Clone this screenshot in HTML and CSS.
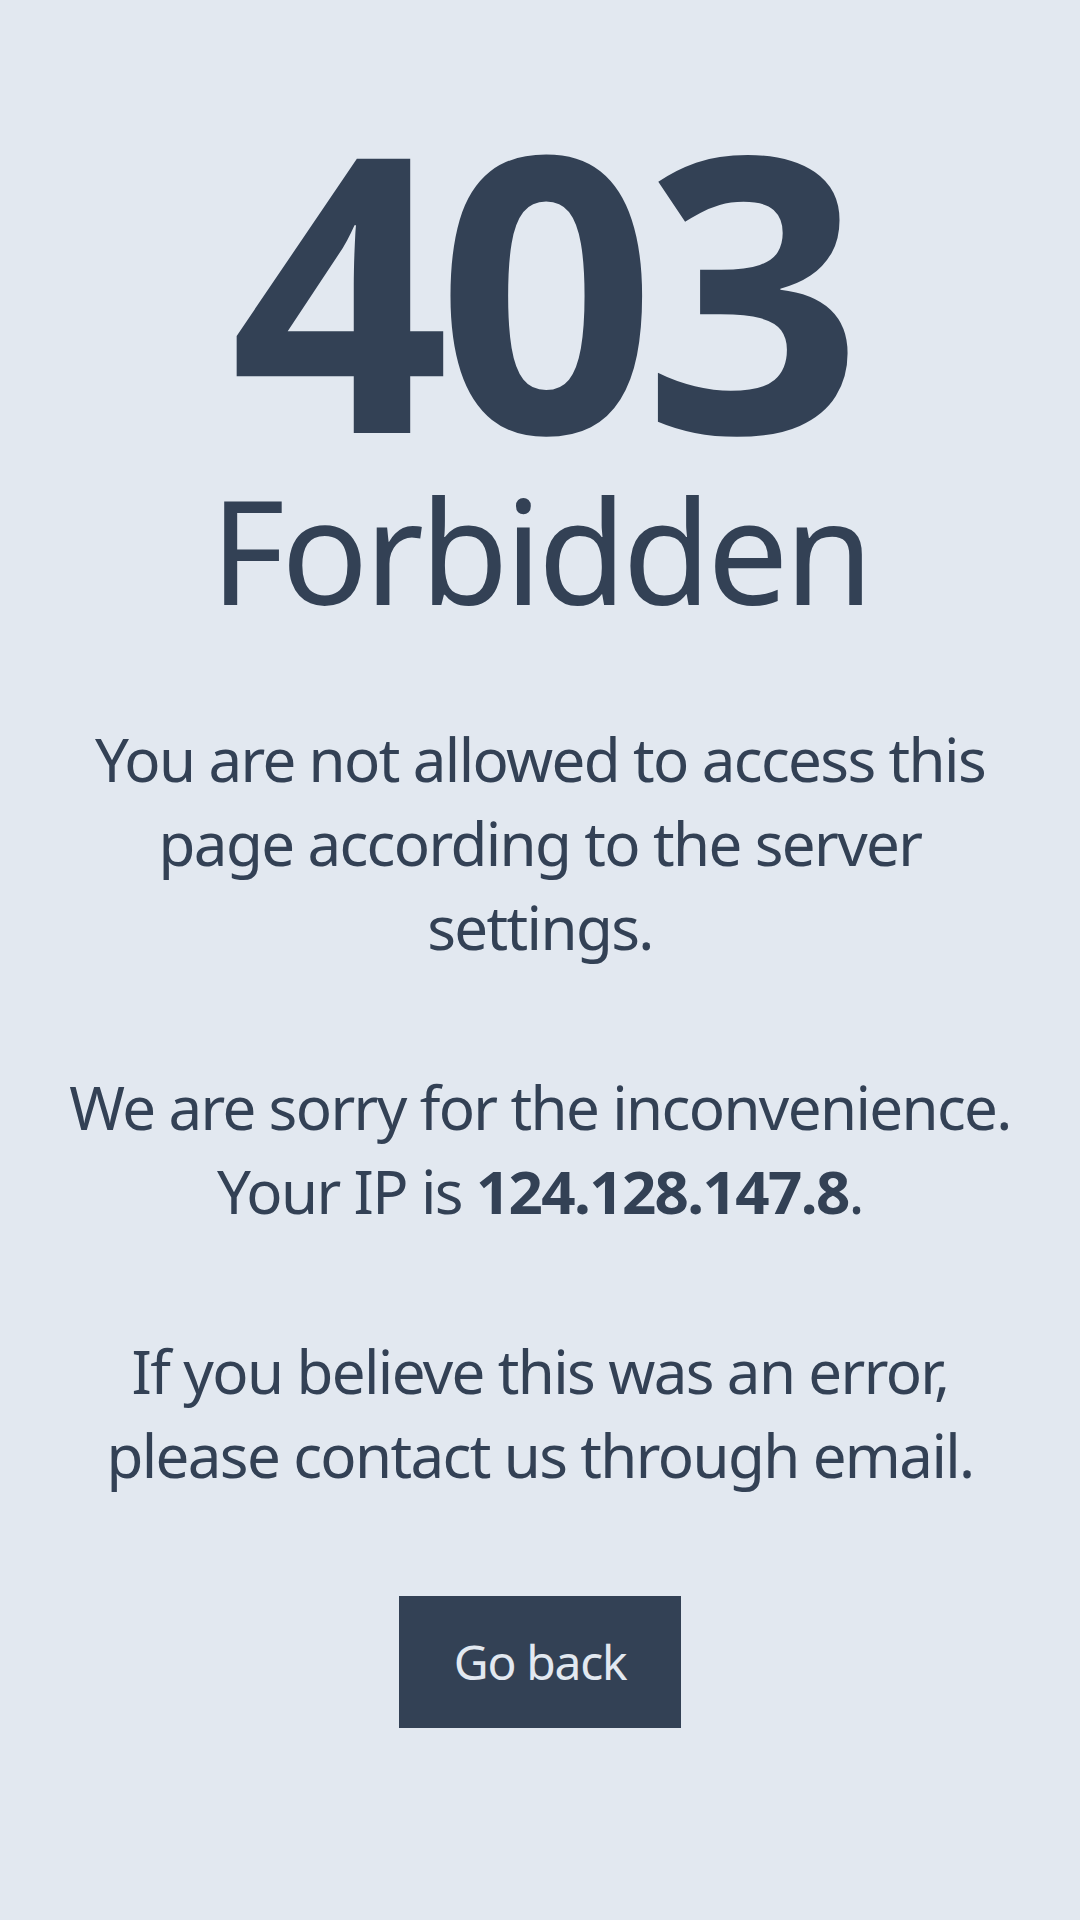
FILE: index.html
```html
<!DOCTYPE html>
<html lang="en">
<head>
    <meta charset="UTF-8">
    <title>403 Forbidden</title>
    <link rel="stylesheet" href="styles.css">
</head>
<body>
    <main class="page">
        <h1 class="code">403</h1>
        <h2 class="title">Forbidden</h2>
        <p class="message">You are not allowed to access this page according to the server settings.</p>
        <p class="message">We are sorry for the inconvenience. Your IP is <strong>124.128.147.8</strong>.</p>
        <p class="message">If you believe this was an error, please contact us through email.</p>
        <a class="back-btn" href="#" onclick="history.back(); return false;">Go back</a>
    </main>
</body>
</html>
```

FILE: styles.css
```css
html, body {
    margin: 0;
    padding: 0;
}
body {
    min-height: 1920px;
    background-color: #e2e8f0;
    color: #334155;
    font-family: "Noto Sans", "Open Sans", sans-serif;
}
.page {
    display: flex;
    flex-direction: column;
    align-items: center;
    text-align: center;
    padding: 93px 48px 0;
}
.code {
    margin: 0;
    font-size: 384px;
    line-height: 1;
    font-weight: 700;
    letter-spacing: -0.034em;
}
.title {
    margin: 0;
    font-size: 144px;
    line-height: 1;
    font-weight: 400;
    letter-spacing: -0.027em;
}
.message {
    margin: 96px 0 0;
    font-size: 60px;
    line-height: 84px;
    letter-spacing: -0.027em;
}
.message strong {
    font-weight: 700;
}
.back-btn {
    margin-top: 99px;
    padding: 30px 55px;
    background-color: #334155;
    color: #e2e8f0;
    font-size: 48px;
    line-height: 72px;
    letter-spacing: -0.027em;
    text-decoration: none;
}
```
